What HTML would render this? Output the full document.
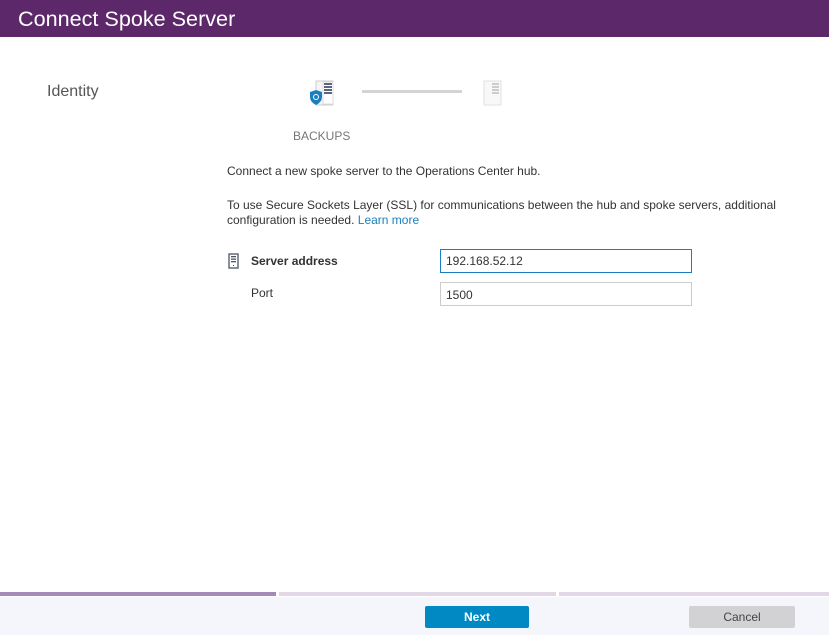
<!DOCTYPE html>
<html><head><style>
body{margin:0;width:829px;height:635px;position:relative;background:#fff;font-family:"Liberation Sans",sans-serif;overflow:hidden}
.a{position:absolute}
</style></head><body>
<div class="a" style="left:0;top:0;width:829px;height:37px;background:#5c2869"></div>
<div class="a" style="left:18px;top:6px;font-size:21.6px;color:#fff">Connect Spoke Server</div>
<div class="a" style="left:47px;top:83px;font-size:16px;color:#555">Identity</div>

<svg class="a" style="left:309px;top:80px" width="28" height="28" viewBox="0 0 28 28">
<rect x="7" y="1" width="17" height="24" fill="#f4f4f4" stroke="#ccc"/>
<rect x="14" y="2" width="10" height="22" fill="#fff" stroke="#ddd"/>
<rect x="15" y="3" width="8" height="2" fill="#5a6680"/><rect x="15" y="6" width="8" height="2" fill="#5a6680"/><rect x="15" y="9" width="8" height="2" fill="#5a6680"/><rect x="15" y="12" width="8" height="2" fill="#5a6680"/>
<path d="M1 12 L7 10 L13 12 L13 17 Q13 22 7 25 Q1 22 1 17Z" fill="#1a7fc0"/>
<circle cx="7" cy="17" r="2.5" fill="none" stroke="#fff" stroke-width="1"/>
</svg>
<div class="a" style="left:362px;top:90px;width:100px;height:3px;background:#d4d4d4"></div>
<svg class="a" style="left:483px;top:80px" width="20" height="28" viewBox="0 0 20 28">
<rect x="1" y="1" width="17" height="24" fill="#f8f8f8" stroke="#e2e2e2"/>
<rect x="9" y="3" width="7" height="2" fill="#ccc"/><rect x="9" y="6" width="7" height="2" fill="#ccc"/><rect x="9" y="9" width="7" height="2" fill="#ccc"/><rect x="9" y="12" width="7" height="2" fill="#ccc"/>
</svg>
<div class="a" style="left:293px;top:129px;font-size:12px;color:#777">BACKUPS</div>

<div class="a" style="left:227px;top:164px;font-size:12px;color:#333">Connect a new spoke server to the Operations Center hub.</div>
<div class="a" style="left:227px;top:198px;width:570px;font-size:12px;color:#333;line-height:15px">To use Secure Sockets Layer (SSL) for communications between the hub and spoke servers, additional configuration is needed. <span style="color:#1a7fc0">Learn more</span></div>

<svg class="a" style="left:228px;top:253px" width="12" height="17" viewBox="0 0 12 17">
<rect x="1" y="1" width="9" height="14" fill="none" stroke="#4a5568" stroke-width="1.3"/>
<rect x="3" y="3" width="5" height="1.3" fill="#4a5568"/><rect x="3" y="5.5" width="5" height="1.3" fill="#4a5568"/><rect x="3" y="8" width="5" height="1.3" fill="#4a5568"/>
<rect x="5" y="12" width="1" height="1" fill="#4a5568"/>
</svg>
<div class="a" style="left:251px;top:254px;font-size:12px;font-weight:bold;color:#333">Server address</div>
<div class="a" style="left:251px;top:286px;font-size:12px;color:#333">Port</div>
<div class="a" style="left:440px;top:249px;width:252px;height:24px;border:1px solid #1a7fc0;box-sizing:border-box"></div>
<div class="a" style="left:446px;top:254px;font-size:12px;color:#333">192.168.52.12</div>
<div class="a" style="left:440px;top:282px;width:252px;height:24px;border:1px solid #ccc;box-sizing:border-box"></div>
<div class="a" style="left:446px;top:288px;font-size:12px;color:#333">1500</div>

<div class="a" style="left:0;top:592px;width:276px;height:4px;background:#a48ab5"></div>
<div class="a" style="left:279px;top:592px;width:277px;height:4px;background:#e2d7e7"></div>
<div class="a" style="left:559px;top:592px;width:270px;height:4px;background:#e2d7e7"></div>
<div class="a" style="left:0;top:597px;width:829px;height:38px;background:#f5f6fc"></div>
<div class="a" style="left:425px;top:606px;width:104px;height:22px;background:#0089c2;border-radius:2px;color:#fff;font-size:12px;font-weight:bold;text-align:center;line-height:22px">Next</div>
<div class="a" style="left:689px;top:606px;width:106px;height:22px;background:#d2d2d4;border-radius:2px;color:#444;font-size:12px;text-align:center;line-height:22px">Cancel</div>
</body></html>
